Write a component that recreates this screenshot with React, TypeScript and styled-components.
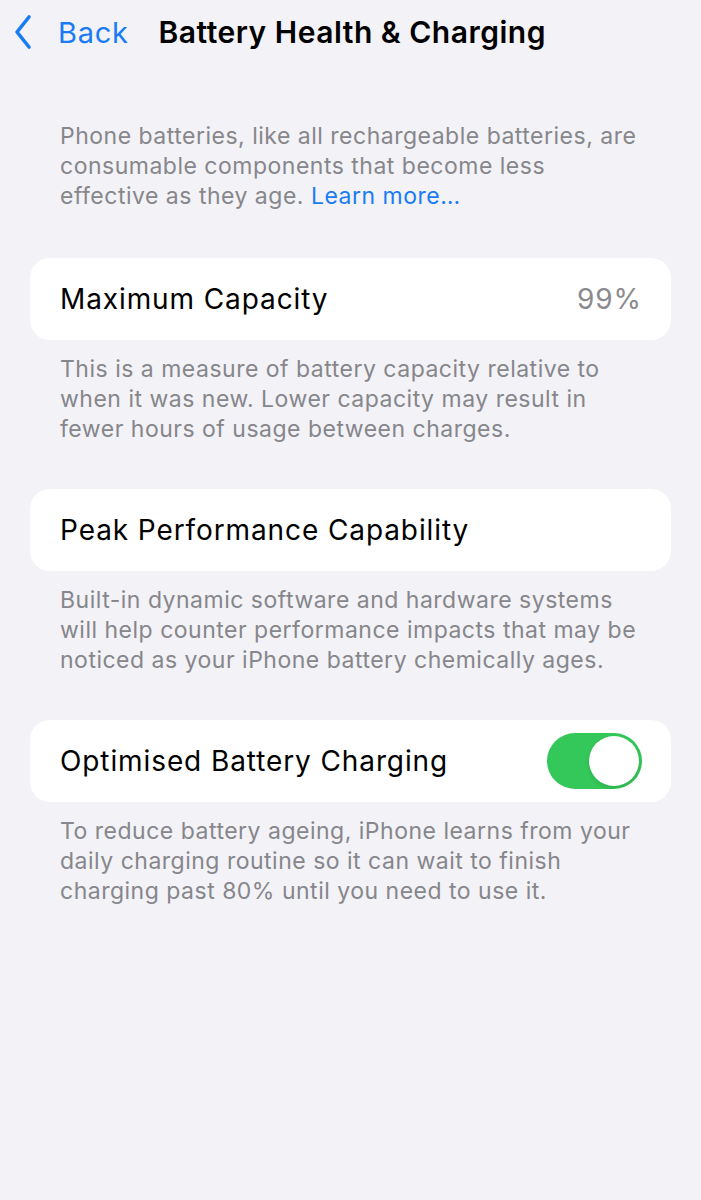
import React from 'react';
import styled, { createGlobalStyle } from 'styled-components';

// ==============================================================================
// Global
// ==============================================================================

const GlobalStyle = createGlobalStyle`
  html, body {
    margin: 0;
    padding: 0;
    background: #f2f2f7;
  }
  body {
    font-family: Inter, 'Noto Sans', sans-serif;
    -webkit-font-smoothing: antialiased;
  }
`;

// ==============================================================================
// Styled Components
// ==============================================================================

const Page = styled.div`
  min-height: 1200px;
  background: #f2f2f7;
  display: flex;
  flex-direction: column;
`;

const NavBar = styled.header`
  height: 64px;
  display: flex;
  align-items: center;
  padding: 0 14px;
`;

const BackButton = styled.button`
  display: flex;
  align-items: center;
  gap: 26px;
  background: none;
  border: none;
  padding: 0;
  color: #1a7cf4;
  font-family: inherit;
  font-size: 29px;
  letter-spacing: 0.7px;
  cursor: pointer;
`;

const Title = styled.h1`
  margin: 0 0 0 30px;
  font-size: 30px;
  font-weight: 600;
  color: #000;
  letter-spacing: 0.5px;
`;

const Content = styled.main`
  padding: 57px 30px 0;
  display: flex;
  flex-direction: column;
`;

const Note = styled.p<{ $gapAfter?: number }>`
  margin: 0 0 ${(p) => p.$gapAfter ?? 45}px;
  padding: 0 30px;
  font-size: 23px;
  line-height: 30px;
  letter-spacing: 0.5px;
  color: #86868b;
`;

const Link = styled.a`
  color: #1a7cf4;
  text-decoration: none;
`;

const Card = styled.section`
  background: #ffffff;
  border-radius: 20px;
  height: 82px;
  padding: 0 29px 0 30px;
  display: flex;
  align-items: center;
  justify-content: space-between;
  margin-bottom: 14px;
`;

const Label = styled.span`
  font-size: 28px;
  letter-spacing: 0.9px;
  color: #000;
`;

const Value = styled.span`
  font-size: 28px;
  letter-spacing: 0.9px;
  color: #8a8a8e;
`;

const Toggle = styled.div<{ $on: boolean }>`
  width: 95px;
  height: 56px;
  border-radius: 28px;
  background: ${(p) => (p.$on ? '#34c759' : '#e9e9ea')};
  display: flex;
  align-items: center;
  justify-content: ${(p) => (p.$on ? 'flex-end' : 'flex-start')};
  padding: 3px;
  box-sizing: border-box;
`;

const Knob = styled.div`
  width: 50px;
  height: 50px;
  border-radius: 50%;
  background: #fff;
  box-shadow: 0 2px 4px rgba(0, 0, 0, 0.12);
`;

// ==============================================================================
// Main Component
// ==============================================================================

const Chevron = () => (
  <svg width="18" height="36" viewBox="0 0 18 36" fill="none">
    <polyline
      points="15,3 3,18 15,33"
      stroke="#1a7cf4"
      strokeWidth="3.6"
      strokeLinecap="round"
      strokeLinejoin="round"
    />
  </svg>
);

const App: React.FC = () => (
  <>
    <GlobalStyle />
    <Page>
      <NavBar>
        <BackButton>
          <Chevron />
          Back
        </BackButton>
        <Title>Battery Health &amp; Charging</Title>
      </NavBar>

      <Content>
        <Note $gapAfter={47}>
          Phone batteries, like all rechargeable batteries, are consumable components that become less
          effective as they age. <Link href="#">Learn more…</Link>
        </Note>

        <Card>
          <Label>Maximum Capacity</Label>
          <Value>99%</Value>
        </Card>
        <Note>
          This is a measure of battery capacity relative to when it was new. Lower capacity may result in
          fewer hours of usage between charges.
        </Note>

        <Card>
          <Label>Peak Performance Capability</Label>
        </Card>
        <Note>
          Built-in dynamic software and hardware systems will help counter performance impacts that may be
          noticed as your iPhone battery chemically ages.
        </Note>

        <Card>
          <Label>Optimised Battery Charging</Label>
          <Toggle $on>
            <Knob />
          </Toggle>
        </Card>
        <Note>
          To reduce battery ageing, iPhone learns from your daily charging routine so it can wait to finish
          charging past 80% until you need to use it.
        </Note>
      </Content>
    </Page>
  </>
);

export default App;
